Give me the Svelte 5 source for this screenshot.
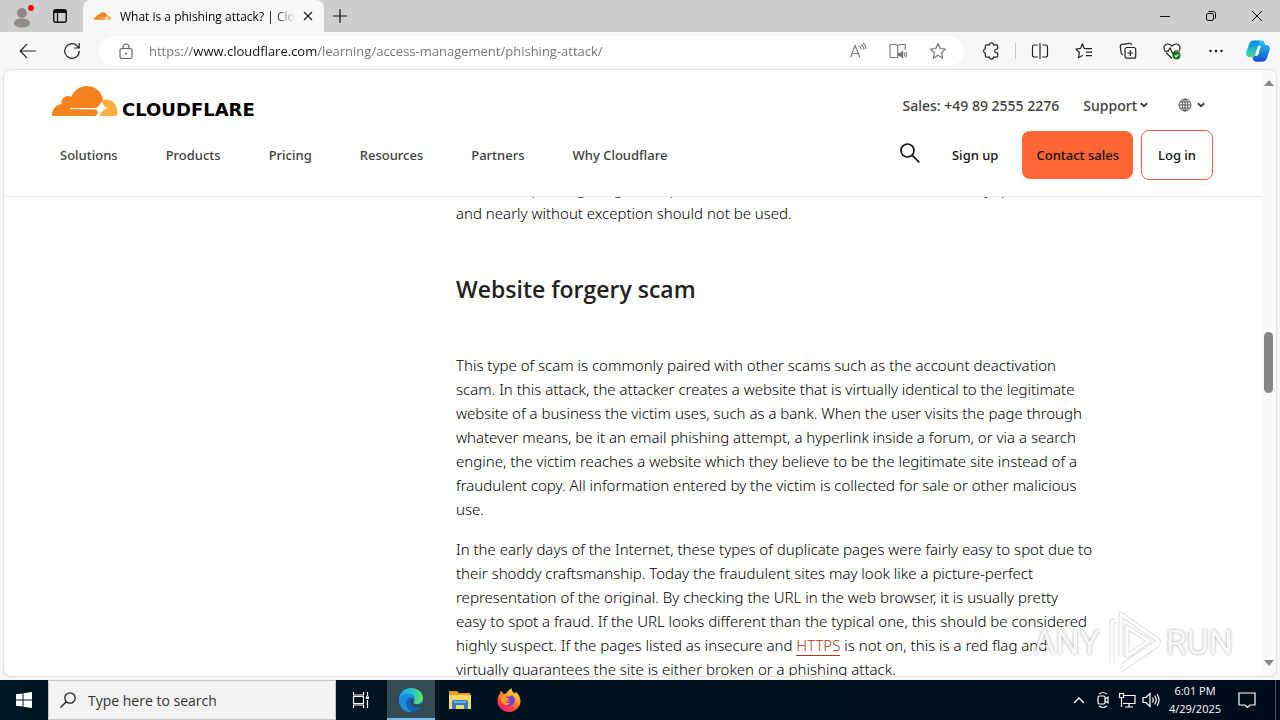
<script>
  const nav = ['Solutions', 'Products', 'Pricing', 'Resources', 'Partners', 'Why Cloudflare'];
  const scam = [
    'This type of scam is commonly paired with other scams such as the account deactivation',
    'scam. In this attack, the attacker creates a website that is virtually identical to the legitimate',
    'website of a business the victim uses, such as a bank. When the user visits the page through',
    'whatever means, be it an email phishing attempt, a hyperlink inside a forum, or via a search',
    'engine, the victim reaches a website which they believe to be the legitimate site instead of a',
    'fraudulent copy. All information entered by the victim is collected for sale or other malicious',
    'use.'
  ];
  const early = [
    'In the early days of the Internet, these types of duplicate pages were fairly easy to spot due to',
    'their shoddy craftsmanship. Today the fraudulent sites may look like a picture-perfect',
    'representation of the original. By checking the URL in the web browser, it is usually pretty',
    'easy to spot a fraud. If the URL looks different than the typical one, this should be considered'
  ];
  let url = $state('https://www.cloudflare.com/learning/access-management/phishing-attack/');
</script>

{#snippet cloud(w, h)}
  <svg width={w} height={h} viewBox="0 0 66 30" aria-hidden="true">
    <path fill="#f6821f" d="M0 30C-.3 23 4 18.500 9.500 18.300C8.500 12.500 14 8 19.200 11C22 4 28.500 0 35 0C43 0 49.500 5.500 51 13C50.500 16 49 18 48 20.500L46.500 24.500C46.500 28 44.500 30 41.500 30Z"/>
    <path fill="#fbad41" d="M50.500 14C59 11.500 66 18 65.500 28Q65.500 30 63.500 30H46C47.500 28 47.500 26 48.500 23.500Z"/>
    <path fill="#fff" d="M18 22H43Q46.500 21.800 48.500 17L50.500 16Q51 21 56 22.200Q50 23.500 47.500 30H45Q46.500 24.500 44 23.600L18 23Z"/>
  </svg>
{/snippet}

{#snippet chevron()}
  <svg class="chev" width="8" height="6" viewBox="0 0 8 6" aria-hidden="true"><path d="M.8 1.200 4 4.300 7.200 1.200" fill="none" stroke="#404040" stroke-width="1.900"/></svg>
{/snippet}

<div class="desktop">
  <div class="tabs">
    <button class="profile" aria-label="Profile">
      <svg width="24" height="26" viewBox="0 0 24 26"><circle cx="12" cy="10" r="5" fill="#8e8b88"/><ellipse cx="12" cy="20" rx="8" ry="4.500" fill="#8e8b88"/><circle cx="21" cy="5" r="3" fill="#e0101c"/></svg>
    </button>
    <button class="workspace" aria-label="Tab actions">
      <svg width="16" height="16" viewBox="0 0 16 16"><rect x="1.700" y="1.700" width="12.600" height="12.600" rx="2.200" fill="none" stroke="#111" stroke-width="1.400"/><path d="M2 2h12v3H2z" fill="#111"/><path d="M5.500 4v10" stroke="#111" stroke-width="1.200"/></svg>
    </button>
    <div class="tab">
      {@render cloud(17, 8)}
      <span class="title">What is a phishing attack? | Cloudflare</span>
      <button aria-label="Close tab"><svg width="10" height="10" viewBox="0 0 10 10"><path d="m1 1 8 8M9 1 1 9" stroke="#222" stroke-width="1.300"/></svg></button>
    </div>
    <button class="new" aria-label="New tab"><svg width="14" height="14" viewBox="0 0 14 14"><path d="M7 0v14M0 7h14" stroke="#111" stroke-width="1.200"/></svg></button>
    <div class="window">
      <button aria-label="Minimize"><svg width="10" height="10" viewBox="0 0 10 10"><path d="M0 5.500h10" stroke="#111"/></svg></button>
      <button aria-label="Restore"><svg width="10" height="10" viewBox="0 0 10 10" fill="none" stroke="#111"><rect x=".5" y="2.500" width="7" height="7" rx="1.500"/><path d="M2.500.5h5q2 0 2 2v5"/></svg></button>
      <button aria-label="Close"><svg width="10" height="10" viewBox="0 0 10 10"><path d="m0 0 10 10M10 0 0 10" stroke="#111"/></svg></button>
    </div>
  </div>

  <div class="toolbar">
    <button class="back" aria-label="Back"><svg width="18" height="16" viewBox="0 0 18 16" fill="none" stroke="#222" stroke-width="1.200"><path d="M17 8H1.500M8 1.200 1.200 8 8 14.800"/></svg></button>
    <button class="reload" aria-label="Refresh"><svg width="18" height="18" viewBox="0 0 18 18" fill="none" stroke="#222" stroke-width="1.200"><path d="M16.300 9a7.300 7.300 0 1 1-2.200-5.200L16 5.700M16.200 1v5h-5"/></svg></button>
    <div class="omnibox">
      <svg class="lock" width="14" height="17" viewBox="0 0 14 17" fill="none" stroke="#666" stroke-width="1.200"><rect x="1" y="5.500" width="12" height="10" rx="1.800"/><path d="M4 5.500V4a3 3 0 0 1 6 0v1.500"/><circle cx="7" cy="10.500" r="1" fill="#666" stroke="none"/></svg>
      <input aria-label="Address" bind:value={url} spellcheck="false" />
      <button aria-label="Read aloud"><svg width="18" height="18" viewBox="0 0 18 18" fill="none" stroke="#777" stroke-width="1.100"><path d="m1.500 15.500 4.700-12 4.700 12M3 11.500h6.500M10 4q2 1 2.200 3.500M12 2.500q2.800 1.500 2.800 5M14 1q3 2 3 6"/></svg></button>
      <button aria-label="Immersive reader"><svg width="18" height="18" viewBox="0 0 18 18" fill="none" stroke="#777" stroke-width="1.100"><path d="M8.700 15.500H1V2.500h5.200q2.500 0 2.500 2v11M8.700 4.500q0-2 2.500-2h5V8"/><path d="M9.500 11.500h1.800L13.500 9.500v6l-2.200-1.800H9.500z" fill="#777"/><path d="M15 10.500q1 2 0 4M16.700 9.500q1.600 3 0 6"/></svg></button>
      <button aria-label="Add to favorites"><svg width="18" height="18" viewBox="0 0 18 18" fill="none" stroke="#777" stroke-width="1.200" stroke-linejoin="round"><path d="m9 1.500 2.200 5 5.300.6-4 3.600 1.200 5.500L9 13.300l-4.700 2.900 1.200-5.500-4-3.600 5.300-.6z"/></svg></button>
    </div>
    <div class="actions">
      <button aria-label="Extensions"><svg width="18" height="18" viewBox="0 0 18 18" fill="none" stroke="#222" stroke-width="1.200" stroke-linejoin="round"><path d="M4.500 2.800h3a2 2 0 0 1 4 0h3q1.200 0 1.200 1.200v3h-1a1.900 1.900 0 0 0 0 3.900h1v3q0 1.200-1.200 1.200h-3a2 2 0 0 1-4 0h-3q-1.200 0-1.200-1.200v-2.800a2.200 2.200 0 0 1 0-4.300V4q0-1.200 1.200-1.200z"/></svg></button>
      <i class="sep"></i>
      <button aria-label="Split screen"><svg width="18" height="18" viewBox="0 0 18 18" fill="none" stroke="#222" stroke-width="1.200"><path d="M6.800 3H3.500Q1.500 3 1.500 5v8q0 2 2 2h3.300M11.200 3h3.300q2 0 2 2v8q0 2-2 2h-3.300M9 1v16"/></svg></button>
      <button aria-label="Favorites"><svg width="18" height="18" viewBox="0 0 18 18" fill="none" stroke="#222" stroke-width="1.200" stroke-linejoin="round"><path d="M11 6.500 9.200 6.300 7.500 1.800 5.600 6.300.9 7l3.500 3.500-.9 5.200L8 13.300M11 6.700h6M11 10.200h6M11 13.700h6"/></svg></button>
      <button aria-label="Collections"><svg width="18" height="18" viewBox="0 0 18 18" fill="none" stroke="#222" stroke-width="1.200"><rect x="6" y="5.500" width="10.700" height="10.700" rx="2"/><path d="M11.300 8v6M8.300 11h6M4 13Q2.500 12.500 2.200 11L1.200 4.500Q1 2.700 3 2.300l7-1Q12 1 12.600 3"/></svg></button>
      <button aria-label="Browser essentials"><svg width="18" height="18" viewBox="0 0 18 18" fill="none" stroke="#222" stroke-width="1.200"><path d="M1.500 8Q0 4.500 2.500 2.700 5.500.8 9 4q3.500-3.200 6.500-1.300Q18 4.500 16.500 8M3 10.500l6 6M1 9.200h4L7 6l3 6 2-3h5"/><circle cx="13.500" cy="13.500" r="4" fill="#187818" stroke="none"/><path d="m11.700 13.500 1.300 1.300 2.300-2.500" stroke="#fff"/></svg></button>
      <button aria-label="Settings and more"><svg width="18" height="18" viewBox="0 0 18 18" fill="#111"><circle cx="3.500" cy="9" r="1.200"/><circle cx="9" cy="9" r="1.200"/><circle cx="14.500" cy="9" r="1.200"/></svg></button>
      <button class="copilot" aria-label="Copilot">
        <svg width="24" height="24" viewBox="0 0 24 24">
          <defs><linearGradient id="cpa" x1="0" y1="0" x2="0" y2="1"><stop offset="0" stop-color="#137fe0"/><stop offset=".5" stop-color="#1cb5cf"/><stop offset="1" stop-color="#58d68b"/></linearGradient><linearGradient id="cpb" x1="0" y1="0" x2="0" y2="1"><stop offset="0" stop-color="#2bc3f0"/><stop offset="1" stop-color="#1450cf"/></linearGradient></defs>
          <path fill="url(#cpa)" d="M7 1.500h7q2 .4 2.500 2.500L12 7 9 16q-.8 2-3 2H3Q-.5 17.500.3 13L3.500 4Q4.500 1.500 7 1.500z"/>
          <path fill="url(#cpb)" d="M13 1.500h3q2 .2 2.600 2.500l.5 2H21q3.500.7 2.700 5L20.500 20q-1 2.700-4 2.700H10q-3-.2-3.500-4.700 2 0 2.700-2l3-1.500Z"/>
          <path fill="#fff" d="M12.500 7H15l-2.500 8q-.7 2-2.500 2H9q.7-.5 1.200-2.500z"/>
        </svg>
      </button>
    </div>
  </div>

  <div class="page">
    <div class="content">
      <header>
        <div class="row top">
          <a class="brand" href="#home">{@render cloud(66, 30)}<span>CLOUDFLARE</span></a>
          <div class="util">
            <a href="#sales">Sales: +49 89 2555 2276</a>
            <button>Support {@render chevron()}</button>
            <button class="lang" aria-label="Language">
              <svg width="14" height="14" viewBox="0 0 14 14" fill="none" stroke="#555"><circle cx="7" cy="7" r="6"/><ellipse cx="7" cy="7" rx="2.800" ry="6"/><path d="M7 1v12M1 7h12M2 4h10M2 10h10"/></svg>
              {@render chevron()}
            </button>
          </div>
        </div>
        <div class="row">
          <nav>{#each nav as item}<a href="#nav">{item}</a>{/each}</nav>
          <div class="cta">
            <button class="find" aria-label="Search"><svg width="20" height="20" viewBox="0 0 20 20" fill="none" stroke="#111" stroke-width="1.700"><circle cx="7.500" cy="7.500" r="6.500"/><path d="m12.300 12.300 7 7"/></svg></button>
            <a class="signup" href="#signup">Sign up</a>
            <a class="contact" href="#contact">Contact sales</a>
            <a class="login" href="#login">Log in</a>
          </div>
        </div>
      </header>
      <article>
        <p>website requesting a login and password that is not secure should be seriously questioned,<br />and nearly without exception should not be used.</p>
        <h2>Website forgery scam</h2>
        <p>{#each scam as line}{line}<br />{/each}</p>
        <p>{#each early as line}{line}<br />{/each}highly suspect. If the pages listed as insecure and <a href="#https">HTTPS</a> is not on, this is a red flag and<br />virtually guarantees the site is either broken or a phishing attack.</p>
      </article>
    </div>
    <div class="scroll" aria-hidden="true">
      <svg width="10" height="6" viewBox="0 0 10 6"><path d="M0 6 5 0l5 6z" fill="#858585"/></svg>
      <div class="track"><i></i></div>
      <svg width="10" height="6" viewBox="0 0 10 6"><path d="M0 0 5 6l5-6z" fill="#858585"/></svg>
    </div>
  </div>

  <div class="taskbar">
    <button aria-label="Start"><svg width="16" height="16" viewBox="0 0 16 16" fill="#fff"><path d="M0 2.300 6.500 1.400V7.500H0zM7.500 1.200 16 0v7.500H7.500zM0 8.500h6.500v6.100L0 13.700zM7.500 8.500H16V16l-8.500-1.200z"/></svg></button>
    <label class="search">
      <svg width="16" height="16" viewBox="0 0 16 16" fill="none" stroke="#222" stroke-width="1.300"><circle cx="10" cy="6" r="5.200"/><path d="M6.300 9.700.5 15.500"/></svg>
      <input aria-label="Search" placeholder="Type here to search" />
    </label>
    <button aria-label="Task View"><svg width="18" height="18" viewBox="0 0 18 18" fill="none" stroke="#fff" stroke-width="1.200"><path d="M1.500 1v3h10V1M1.500 17v-3h10v3M1.500 5.500h10v7h-10zM15.500 1v4M15.500 9v8"/><path d="M14 5.500h3v2.500h-3z" fill="#fff" stroke="none"/></svg></button>
    <button class="active" aria-label="Microsoft Edge">
      <svg width="24" height="24" viewBox="0 0 24 24">
        <defs><linearGradient id="eg" x1="0" y1=".3" x2="1" y2=".4"><stop offset="0" stop-color="#20a9e4"/><stop offset=".6" stop-color="#2cc5c0"/><stop offset="1" stop-color="#6be05a"/></linearGradient></defs>
        <circle cx="12" cy="12" r="12" fill="#0f62b4"/>
        <path fill="url(#eg)" d="M0 12C0 5 5 0 12 0c7 0 12 4.500 12 10 0 4-3 6-6.500 6-3 0-4-1-3-2.500C16 11 14 8.500 11 8.500 5.500 8.500 0 12 0 18z"/>
        <path fill="#1b8de0" d="M0 12c1-5 5.500-6.500 9.500-6.200C14 6 17 9 15.500 12 14 9 9 8 7.500 13c-1 4 1 8.500 5 10.900C5 24.500 0 19 0 12z"/>
        <path fill="#344a52" d="M14.800 13.200c-1.300 1.600.2 3.300 3.200 3.500 2 .1 3.500-.4 4.700-1.200l2 0-1 4q-1.200-.8-1.700-.7C20 19.300 18.500 19.500 16.500 19c-4 0-6.500-3.500-4.500-7 .5-1 1.700-1.500 2.400-.8.500.500.800 1.200.4 2z"/>
      </svg>
    </button>
    <button aria-label="File Explorer"><svg width="22" height="20" viewBox="0 0 22 20"><path fill="#e3a21a" d="M0 1h8l2 2h11v6H0z"/><path fill="#ffd766" d="M0 5h22v14H0z"/><path fill="#2f7fc8" d="M3 19v-7q0-2 2-2h12q2 0 2 2v7h-4v-4H7v4z"/><path fill="#66b2e8" d="M5 11h12v2H5z"/></svg></button>
    <button aria-label="Firefox">
      <svg width="24" height="24" viewBox="0 0 24 24">
        <defs><linearGradient id="fx" x1=".8" y1="0" x2=".2" y2="1"><stop offset="0" stop-color="#fff04a"/><stop offset=".4" stop-color="#ff9a24"/><stop offset=".75" stop-color="#ff3b47"/><stop offset="1" stop-color="#e5178f"/></linearGradient></defs>
        <path fill="url(#fx)" d="M3 5.500 4 2.500 6.500 6 9 5.500C10 3.500 12 2.500 14.500 0c0 2.500 1 3.500 3 5.500l1.500-1.500c2.500 2 4.500 5.500 4.500 9C23.500 19 18.500 24 12 24S.5 19 .5 13C.5 10 1.500 7.500 3 5.500z"/>
        <path fill="#7441d6" d="M8 9q2-1 4 0 2-2.500 4.500-.5Q19 11 17.500 14.500 15.500 18 12 18q-4.500-.5-5.500-4 2 1 3.500.5 1.500-1 3-2-3.500 0-5-3.500z"/>
        <path fill="#ff9a24" d="M4 8q2-1 4.500.5 1 2 3.500 2-1 2.500-4 3 2 2 5 1.500-2 3-5.500 1.500Q3.500 14 4 8z"/>
      </svg>
    </button>
    <div class="tray">
      <button aria-label="Show hidden icons"><svg width="12" height="8" viewBox="0 0 12 8"><path d="m1 7 5-5 5 5" fill="none" stroke="#fff" stroke-width="1.300"/></svg></button>
      <button aria-label="Meet Now"><svg width="16" height="18" viewBox="0 0 16 18" fill="none" stroke="#fff" stroke-width="1.200"><rect x="3" y="5" width="7" height="8" rx="1.500"/><path d="m10 8 3-2v6l-3-2M4 3q4-3 8 0M4 15q4 3 8 0"/></svg></button>
      <button aria-label="Network"><svg width="18" height="16" viewBox="0 0 18 16" fill="none" stroke="#fff" stroke-width="1.200"><path d="M5 3.500h12v8H5M11 11.500V15M7 15h8M1.500 1.500h4v4h-4zM3.500 5.500V15"/></svg></button>
      <button aria-label="Volume"><svg width="18" height="16" viewBox="0 0 18 16" fill="none" stroke="#fff" stroke-width="1.200"><path d="M1 5.500h3l4-4v13l-4-4H1zM10.500 5.500q1.500 2.500 0 5M12.700 3.500q3 4.500 0 9M15 2q4 6 0 12"/></svg></button>
      <div class="clock"><span>6:01 PM</span><span>4/29/2025</span></div>
      <button class="notes" aria-label="Notifications"><svg width="18" height="18" viewBox="0 0 18 18" fill="none" stroke="#fff" stroke-width="1.200"><path d="M1 2h16v12h-5l-2.500 2.500L7 14H1z"/></svg></button>
      <i class="show"></i>
    </div>
  </div>

  <div class="watermark">
    <span>ANY</span>
    <svg width="60" height="64" viewBox="0 0 60 64" fill="none" stroke-linejoin="round"><g stroke="#aaa" stroke-width="5" opacity=".6"><path d="M18 46V4l38 27-36 24M24 17v29l22-15zM9 53V11h4M18 60l38-26"/></g><g stroke="#fff" stroke-width="3"><path d="M18 46V4l38 27-36 24M24 17v29l22-15zM9 53V11h4M18 60l38-26"/></g></svg>
    <span>RUN</span>
  </div>
</div>

<style>
  :global(body) { margin: 0; }
  .desktop {
    position: relative;
    display: flex;
    flex-direction: column;
    height: 100vh;
    overflow: hidden;
    background: #f7f7f7;
    font-family: "Open Sans", "Noto Sans", sans-serif;
    color: #222;
  }
  button {
    display: flex;
    align-items: center;
    justify-content: center;
    padding: 0;
    border: 0;
    background: none;
    font: inherit;
    color: inherit;
  }
  a { color: inherit; text-decoration: none; }
  svg { flex: none; }
  input { min-width: 0; border: 0; padding: 0; background: none; font: inherit; outline: 0; }

  .tabs { display: flex; flex: none; height: 32px; background: #cdcdcd; }
  .profile { width: 44px; }
  .workspace { width: 32px; margin-right: 7px; }
  .tab {
    display: flex;
    align-items: center;
    box-sizing: border-box;
    width: 241px;
    padding: 0 8px 0 11px;
    border-radius: 8px 8px 0 0;
    background: #f7f7f7;
    font-size: 12px;
    color: #000;
  }
  .title {
    flex: 1;
    margin: 0 5px 0 9px;
    overflow: hidden;
    white-space: nowrap;
    mask-image: linear-gradient(90deg, #000 88%, transparent);
  }
  .tab button { width: 16px; height: 16px; }
  .new { width: 32px; }
  .window { display: flex; margin-left: auto; }
  .window button { width: 46px; }

  .toolbar { display: flex; flex: none; align-items: center; height: 38px; }
  .back { width: 56px; }
  .reload { width: 32px; margin-right: 11px; }
  .omnibox {
    display: flex;
    flex: 1;
    align-items: center;
    height: 30px;
    padding: 0 6px 0 20px;
    border-radius: 15px;
    background: #fff;
  }
  .omnibox input {
    flex: 1;
    margin-left: 16px;
    font-size: 13px;
    color: transparent;
    caret-color: #111;
    background: linear-gradient(90deg, #707070 45px, #111 45px, #111 168px, #707070 168px);
    background-clip: text;
  }
  .omnibox button { width: 40px; }
  .actions { display: flex; align-items: center; margin-left: 5px; }
  .actions button { width: 44px; height: 30px; }
  .actions .copilot { width: 40px; margin-right: 2px; }
  .sep { width: 1px; height: 16px; margin: 0 2px; background: #c8c8c8; }

  .page {
    display: flex;
    flex: 1;
    min-height: 0;
    margin: 0 4px 4px;
    border-radius: 7px;
    overflow: hidden;
    background: #fff;
    box-shadow: 0 0 2px #aaa;
  }
  .content { flex: 1; min-width: 0; overflow: hidden; }
  header {
    position: relative;
    z-index: 1;
    padding: 16px 49px 16px 48px;
    border-bottom: 1px solid #ebebeb;
    background: #fff;
    font-family: "Noto Sans", "Open Sans", sans-serif;
    font-size: 13px;
    font-weight: 500;
    color: #404040;
  }
  .row { display: flex; align-items: center; justify-content: space-between; height: 50px; }
  .row.top { height: 38px; margin-bottom: 6px; }
  .brand {
    display: flex;
    align-items: flex-end;
    align-self: flex-start;
    gap: 4px;
    font-family: "DejaVu Sans", sans-serif;
    font-size: 18px;
    font-weight: 700;
    line-height: 12px;
    color: #000;
  }
  .util { display: flex; align-items: center; gap: 24px; font-size: 14px; }
  .util button { gap: 3px; }
  .util .lang { gap: 5px; padding: 0 8px 0 6px; }
  nav { display: flex; gap: 48px; padding-left: 8px; }
  .cta { display: flex; align-items: center; color: #111; }
  .find { margin-right: 32px; padding-bottom: 4px; }
  .signup { margin-right: 24px; }
  .contact, .login { line-height: 48px; border-radius: 8px; }
  .contact { margin-right: 8px; padding: 0 14px; background: #ff6633; }
  .login { padding: 0 16px; border: 1px solid #f0624d; }

  article {
    margin: -20px 0 0 452px;
    font-family: "Noto Sans", "Open Sans", sans-serif;
    font-size: 15px;
    font-weight: 300;
    line-height: 24px;
    white-space: nowrap;
    color: #000;
  }
  p { margin: 0 0 16px; }
  h2 {
    margin: 48px 0;
    font-family: "Open Sans", "Noto Sans", sans-serif;
    font-size: 23px;
    font-weight: 600;
    line-height: 32px;
    color: #222;
  }
  p a { color: #b03a20; border-bottom: 1px solid #b03a20; }

  .scroll {
    display: flex;
    flex-direction: column;
    align-items: center;
    justify-content: space-between;
    width: 13px;
    padding: 10px 1px 10px 0;
    background: #fafafa;
  }
  .track { flex: 1; }
  .track i { display: block; width: 9px; height: 61px; margin-top: 246px; border-radius: 5px; background: #858585; }

  .taskbar { display: flex; flex: none; height: 40px; background: linear-gradient(90deg, #001822, #000c1c); }
  .taskbar > button { width: 49px; }
  .taskbar > button:first-child { width: 48px; }
  .search {
    display: flex;
    align-items: center;
    box-sizing: border-box;
    width: 288px;
    padding-left: 11px;
    border: 1px solid #c4c4c4;
    background: #f2f2f2;
  }
  .search input { flex: 1; margin-left: 12px; font-size: 14px; }
  .search input::placeholder { color: #333; opacity: 1; }
  .taskbar .active { margin-left: 2px; width: 48px; background: #344a52; box-shadow: inset 0 -2px #76b9ed; }
  .tray { display: flex; align-items: center; margin-left: auto; color: #fff; }
  .tray button { width: 24px; height: 40px; }
  .clock { display: flex; flex-direction: column; align-items: center; width: 64px; font-size: 11px; line-height: 18px; }
  .tray .notes { width: 40px; }
  .show { width: 4px; height: 40px; margin-left: 8px; border-left: 1px solid #4d5662; }

  .watermark {
    position: absolute;
    z-index: 2;
    right: 47px;
    bottom: 46px;
    display: flex;
    align-items: center;
    gap: 3px;
    font-family: Roboto, sans-serif;
    font-size: 34px;
    line-height: 64px;
    color: rgba(255, 255, 255, 0.9);
    text-shadow: 0 0 3px #777;
    opacity: 0.7;
    pointer-events: none;
  }
</style>
